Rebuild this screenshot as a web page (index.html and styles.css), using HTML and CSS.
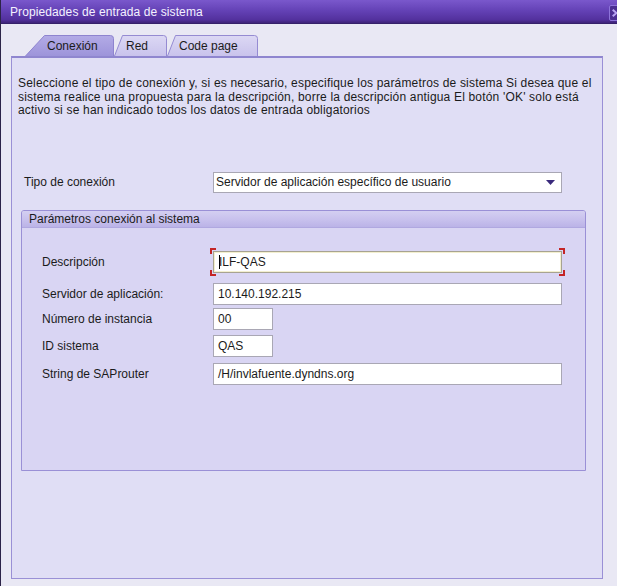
FILE: index.html
```html
<!DOCTYPE html>
<html lang="es">
<head>
<meta charset="utf-8">
<title>Propiedades de entrada de sistema</title>
<link rel="stylesheet" href="styles.css">
</head>
<body>
<div class="win">
  <div class="titlebar">
    <span class="title">Propiedades de entrada de sistema</span>
    <span class="close"><svg width="14" height="16" viewBox="0 0 14 16"><path d="M4 4.5 L8 8 L4 11.5" fill="none" stroke="#b8a4f2" stroke-width="2.2"/></svg></span>
  </div>
  <div class="main">
    <div class="tabs">
      <div class="tab tab-active">
        <svg class="tab-bg" viewBox="0 0 89 21" preserveAspectRatio="none"><defs><linearGradient id="ga" x1="0" y1="0" x2="0" y2="1"><stop offset="0" stop-color="#b3abe6"/><stop offset="1" stop-color="#9d94da"/></linearGradient></defs><path d="M0.5 21 L19.5 0.5 H85.5 Q88.5 0.5 88.5 3.5 V21" fill="url(#ga)" stroke="#8e84cf"/></svg>
        <span class="tab-label">Conexión</span>
      </div>
      <div class="tab tab-red">
        <svg class="tab-bg" viewBox="0 0 53 21" preserveAspectRatio="none"><defs><linearGradient id="gi" x1="0" y1="0" x2="0" y2="1"><stop offset="0" stop-color="#dcd8f4"/><stop offset="1" stop-color="#c9c3ec"/></linearGradient></defs><path d="M0.5 21 L8.5 0.5 H49.5 Q52.5 0.5 52.5 3.5 V21" fill="url(#gi)" stroke="#958bd2"/></svg>
        <span class="tab-label">Red</span>
      </div>
      <div class="tab tab-code">
        <svg class="tab-bg" viewBox="0 0 91 21" preserveAspectRatio="none"><path d="M0.5 21 L8.5 0.5 H87.5 Q90.5 0.5 90.5 3.5 V21" fill="url(#gi)" stroke="#958bd2"/></svg>
        <span class="tab-label">Code page</span>
      </div>
    </div>
    <div class="panel">
      <p class="desc">Seleccione el tipo de conexión y, si es necesario, especifique los parámetros de sistema Si desea que el<br>sistema realice una propuesta para la descripción, borre la descripción antigua El botón 'OK' solo está<br>activo si se han indicado todos los datos de entrada obligatorios</p>
      <div class="type-row">
        <span class="lbl">Tipo de conexión</span>
        <div class="select">
          <span>Servidor de aplicación específico de usuario</span>
          <svg width="9" height="5" viewBox="0 0 9 5"><path d="M0 0 H9 L4.5 5 Z" fill="#3a2a7c"/></svg>
        </div>
      </div>
      <div class="group">
        <div class="group-head">Parámetros conexión al sistema</div>
        <div class="group-body">
          <div class="row row-desc">
            <span class="lbl">Descripción</span>
            <div class="focus-wrap">
              <div class="field field-long field-focus"><span class="caret"></span>ILF-QAS</div>
              <span class="br br-tl"></span><span class="br br-tr"></span><span class="br br-bl"></span><span class="br br-br"></span>
            </div>
          </div>
          <div class="row row-srv">
            <span class="lbl">Servidor de aplicación:</span>
            <div class="field field-long">10.140.192.215</div>
          </div>
          <div class="row row-num">
            <span class="lbl">Número de instancia</span>
            <div class="field field-short">00</div>
          </div>
          <div class="row row-id">
            <span class="lbl">ID sistema</span>
            <div class="field field-short">QAS</div>
          </div>
          <div class="row row-str">
            <span class="lbl">String de SAProuter</span>
            <div class="field field-long">/H/invlafuente.dyndns.org</div>
          </div>
        </div>
      </div>
    </div>
  </div>
</div>
</body>
</html>
```

FILE: styles.css
```css
html, body {
  margin: 0;
  padding: 0;
  overflow: hidden;
  background: #e9e8f4;
}
body {
  font-family: "Liberation Sans", Arial, sans-serif;
  font-size: 12px;
  color: #1b1b1b;
}
.win {
  width: 617px;
  height: 586px;
  border-left: 1px solid #2c2448;
  box-sizing: border-box;
  overflow: hidden;
}
.titlebar {
  height: 24px;
  box-sizing: border-box;
  display: flex;
  align-items: center;
  justify-content: space-between;
  padding-left: 9px;
  background: linear-gradient(to bottom, #7a58cc 0%, #6442b6 45%, #53319e 85%, #3e2378 100%);
  border-bottom: 1px solid #35206a;
}
.title {
  color: #f4f2ff;
  font-size: 12px;
  letter-spacing: 0.1px;
}
.close {
  display: flex;
  width: 14px;
  height: 16px;
  margin-right: -6px;
  margin-top: 2px;
  box-sizing: border-box;
  background: #4b2f92;
  border: 1px solid #8e74da;
  border-radius: 2px;
}
.close svg { display: block; margin-left: -1px; margin-top: -1px; }
.main {
  padding-top: 11px;
  padding-left: 10px;
}
.tabs {
  display: flex;
  height: 21px;
  margin-left: 14px;
}
.tab {
  position: relative;
  height: 21px;
  box-sizing: border-box;
  display: flex;
  align-items: center;
}
.tab-bg {
  position: absolute;
  left: 0;
  top: 0;
  width: 100%;
  height: 100%;
}
.tab-label {
  position: relative;
  line-height: 21px;
  padding-top: 2px;
}
.tab-active { width: 89px; padding-left: 22px; z-index: 2; }
.tab-red { width: 53px; padding-left: 12px; z-index: 1; }
.tab-code { width: 91px; padding-left: 12px; }
.panel {
  width: 592px;
  height: 523px;
  box-sizing: border-box;
  background: #e0def5;
  border: 1px solid #9a90d6;
  border-top: 2px solid #8f86cf;
  padding-left: 6px;
  padding-top: 19px;
}
.desc {
  margin: 0;
  white-space: nowrap;
  line-height: 13.5px;
  letter-spacing: 0.18px;
}
.type-row {
  display: flex;
  align-items: center;
  margin-top: 54px;
  margin-left: 6px;
}
.type-row .lbl { width: 189px; }
.select {
  width: 349px;
  height: 21px;
  box-sizing: border-box;
  background: #fff;
  border: 1px solid #a9a7b4;
  display: flex;
  align-items: center;
  justify-content: space-between;
  padding-left: 2px;
  padding-right: 6px;
}
.group {
  margin-top: 17px;
  margin-left: 3px;
  width: 565px;
  height: 261px;
  box-sizing: border-box;
  border: 1px solid #9a90d6;
  border-radius: 3px 3px 0 0;
  background: #d9d5f3;
}
.group-head {
  height: 16px;
  line-height: 16px;
  padding-left: 7px;
  background: linear-gradient(to bottom, #d4cff1 0%, #c6bfec 60%, #bbb3e7 100%);
  border-bottom: 1px solid #b0a8e0;
  border-radius: 2px 2px 0 0;
}
.group-body {
  padding-left: 20px;
  padding-top: 23px;
}
.row {
  display: flex;
  align-items: center;
}
.row .lbl { width: 171px; }
.row-srv { margin-top: 10px; }
.row-num { margin-top: 3px; }
.row-id { margin-top: 5px; }
.row-str { margin-top: 6px; }
.field {
  height: 22px;
  box-sizing: border-box;
  background: #fff;
  border: 1px solid #a9a7b4;
  padding-left: 4px;
  display: flex;
  align-items: center;
}
.field-long { width: 349px; }
.field-short { width: 60px; }
.field-focus {
  border-color: #a7a391;
  box-shadow: inset 0 0 0 1px #f3efcf;
  padding-left: 5px;
}
.caret {
  display: inline-block;
  width: 1px;
  height: 14px;
  background: #000;
  margin-right: -1px;
}
.focus-wrap {
  position: relative;
}
.br {
  position: absolute;
  width: 4px;
  height: 4px;
  border: 0 solid #c42525;
}
.br-tl { left: -3px; top: -3px; border-left-width: 2px; border-top-width: 2px; }
.br-tr { right: -3px; top: -3px; border-right-width: 2px; border-top-width: 2px; }
.br-bl { left: -3px; bottom: -3px; border-left-width: 2px; border-bottom-width: 2px; }
.br-br { right: -3px; bottom: -3px; border-right-width: 2px; border-bottom-width: 2px; }
```
